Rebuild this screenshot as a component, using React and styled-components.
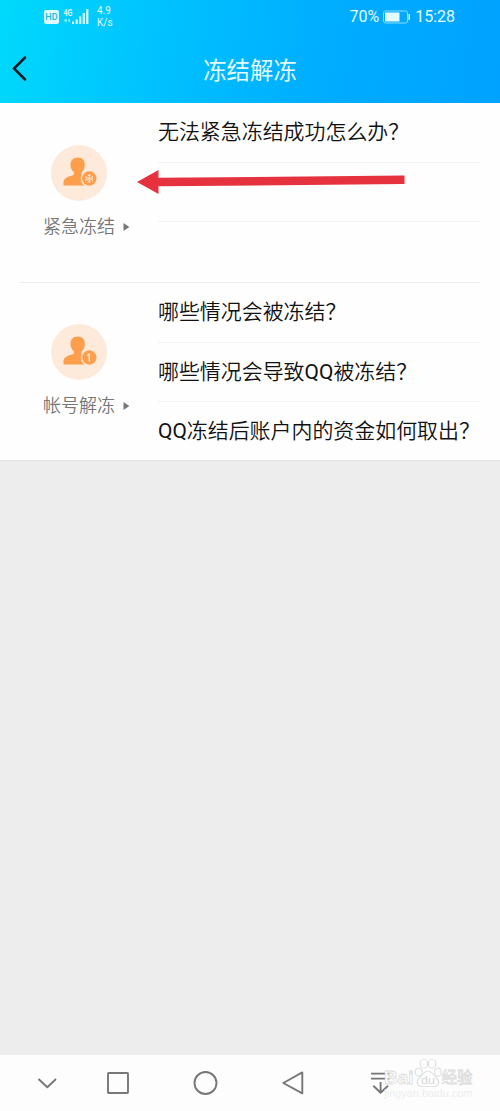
import React from 'react';
import styled, { createGlobalStyle } from 'styled-components';

const GlobalStyle = createGlobalStyle`
  * { box-sizing: border-box; }
  body {
    margin: 0;
    background: #ededed;
    font-family: Roboto, "Noto Sans CJK SC", sans-serif;
  }
`;

const Screen = styled.div`
  position: relative;
  display: flex;
  flex-direction: column;
  width: 500px;
  height: 1111px;
  overflow: hidden;
  background: #ededed;
`;

const Header = styled.header`
  height: 103px;
  color: #e4fbff;
  background: linear-gradient(100deg, #00d9fc 0%, #00c2ff 32%, #00adff 65%, #00a2ff 100%);
`;

const StatusBar = styled.div`
  display: flex;
  justify-content: space-between;
  height: 35px;
  padding: 0 45px 0 44px;
`;

const StatusGroup = styled.div`
  display: flex;
  align-items: center;
  height: 34px;
`;

const Speed = styled.div`
  margin-left: 8px;
  font-size: 10px;
  line-height: 12.5px;
`;

const StatusText = styled.span`
  font-size: 16px;
  line-height: 36px;
`;

const Battery = styled.svg`
  width: 28px;
  height: 14px;
  margin: 0 4px;
`;

const TitleBar = styled.div`
  display: grid;
  grid-template-columns: 40px 1fr 40px;
  align-items: center;
  height: 68px;
`;

const Title = styled.h1`
  margin: 0;
  padding-top: 3px;
  font-size: 23.4px;
  font-weight: 400;
  line-height: 34px;
  text-align: center;
`;

const Panel = styled.main`
  height: 358px;
  padding: 0 20px;
  background: #fefefe;
  border-bottom: 1px solid #e2e2e2;
`;

const Section = styled.section`
  display: flex;
  height: ${props => props.$height}px;
  border-bottom: ${props => (props.$last ? 'none' : '1px solid #ebebeb')};
`;

const Category = styled.div`
  display: flex;
  flex-direction: column;
  width: 138px;
  padding: ${props => props.$top}px 0 0 23px;
`;

const Avatar = styled.svg`
  display: block;
  width: 56px;
  height: 56px;
  margin-left: 8px;
`;

const CategoryName = styled.div`
  display: flex;
  align-items: center;
  gap: 8px;
  height: 26px;
  margin-top: 13px;
  color: #777;
  font-size: 18px;
  font-weight: 350;
  line-height: 28px;
  white-space: nowrap;
`;

const Questions = styled.ul`
  flex: 1;
  margin: 0;
  padding: 0;
  list-style: none;
`;

const Question = styled.li`
  height: ${props => props.$height}px;
  color: #111;
  font-size: 20.95px;
  font-weight: 350;
  line-height: 59px;
  white-space: nowrap;
  border-bottom: 1px solid #f3f3f3;

  &:last-child {
    border-bottom: none;
  }
`;

const Latin = styled.span`
  font-weight: 400;
`;

const Pointer = styled.svg`
  position: absolute;
  left: 137px;
  top: 169px;
`;

const NavBar = styled.nav`
  display: flex;
  align-items: center;
  height: 56px;
  margin-top: auto;
  padding-left: 34px;
  background: #fdfdfd;
`;

const NavIcon = styled.svg`
  width: 26px;
  height: 26px;
  margin-right: ${props => props.$gap || 0}px;
  fill: none;
  stroke: #777;
  stroke-width: 1.9;
  stroke-linejoin: round;
`;

const Watermark = styled.div`
  position: absolute;
  left: 384px;
  bottom: 12px;
  display: flex;
  flex-direction: column;
  width: 92px;
  color: rgba(255, 255, 255, 0.6);
  font-family: "Liberation Sans", "Noto Sans CJK SC", sans-serif;
  -webkit-text-stroke: 0.8px #dcdcdc;
`;

const Brand = styled.div`
  display: flex;
  align-items: flex-end;
  height: 31px;
  font-size: 19px;
  font-weight: 700;
  line-height: 20px;
`;

const BrandSuffix = styled.span`
  font-size: 15.5px;
  font-weight: 400;
`;

const Site = styled.div`
  color: #ededed;
  font-size: 11px;
  line-height: 11px;
  white-space: nowrap;
  -webkit-text-stroke: 0;
`;

const Person = ({ kind }) => (
  <Avatar viewBox="0 0 56 56">
    <circle cx="28" cy="28" r="28" fill="#fdeadb" />
    <path
      d="M26.8 12.5C31.5 12.5 34.2 15.5 33.8 20.5C33.5 24 32.5 25.8 30.7 27.2V30L40 33.5V40.5H12.5V37.5C12.5 33.5 16 31.8 22.8 30V27.2C20.8 25.5 19.7 23.5 19.5 20.5C19.2 15.5 22 12.5 26.8 12.5Z"
      fill="#fd9e4d"
    />
    <circle cx="38.3" cy="33.5" r="8.6" fill="#fdeadb" />
    <circle cx="38.3" cy="33.5" r="7.2" fill="#fd9e4d" />
    {kind === 'freeze' ? (
      <path
        d="M38.3 29V38M34.4 31.2L42.2 35.8M34.4 35.8L42.2 31.2M36.8 29.8L38.3 31.2L39.8 29.8M36.8 37.2L38.3 35.8L39.8 37.2M34.5 32.8L36 33.5L34.5 34.6M42.1 32.8L40.6 33.5L42.1 34.6"
        fill="none"
        stroke="#fff0e2"
        strokeWidth="0.8"
      />
    ) : (
      <path d="M38.3 37.6V29.6M36.3 31.6L38.3 29.6" fill="none" stroke="#fff0e2" strokeWidth="1.3" />
    )}
  </Avatar>
);

const sections = [
  {
    name: '紧急冻结',
    kind: 'freeze',
    height: 180,
    top: 42,
    questions: ['无法紧急冻结成功怎么办？', '', ''],
  },
  {
    name: '帐号解冻',
    kind: 'unfreeze',
    height: 177,
    top: 41,
    last: true,
    questions: [
      '哪些情况会被冻结？',
      <>哪些情况会导致<Latin>QQ</Latin>被冻结？</>,
      <><Latin>QQ</Latin>冻结后账户内的资金如何取出？</>,
    ],
  },
];

const SignalIcons = () => (
  <svg width="45" height="18" viewBox="0 0 45 18">
    <rect x="0" y="2" width="15" height="14" rx="2" fill="#dcfaff" />
    <text x="7.5" y="12.4" textAnchor="middle" fontSize="9" fontWeight="500" fill="#17b8df">HD</text>
    <text x="19.5" y="8" fontSize="8.5" fontWeight="700" fill="#dcfaff" textLength="9" lengthAdjust="spacingAndGlyphs">4G</text>
    <path d="M20 12.5L22 10.5L23 12.5L22 14.5ZM24.5 11H26V14H24.5Z" fill="#a2efff" />
    <path d="M28 13.5H30V16H28ZM31.6 11.5H33.8V16H31.6ZM35.1 8.5H37.3V16H35.1ZM38.7 5H40.9V16H38.7ZM42.2 1H44.4V16H42.2Z" fill="#dcfaff" />
  </svg>
);

const App = () => (
  <>
    <GlobalStyle />
    <Screen>
      <Header>
        <StatusBar>
          <StatusGroup>
            <SignalIcons />
            <Speed>4.9<br />K/s</Speed>
          </StatusGroup>
          <StatusGroup>
            <StatusText>70%</StatusText>
            <Battery viewBox="0 0 28 14">
              <rect x="0.5" y="1" width="24" height="12" rx="2" fill="none" stroke="#8addff" />
              <rect x="2" y="2.5" width="14.5" height="9" fill="#e4fbff" />
              <rect x="25.4" y="4" width="1.6" height="6" fill="#c5f4ff" />
            </Battery>
            <StatusText>15:28</StatusText>
          </StatusGroup>
        </StatusBar>
        <TitleBar>
          <svg width="40" height="30" viewBox="0 0 40 30">
            <path d="M25 3.5L14 14.5L25 25.5" fill="none" stroke="#071a22" strokeWidth="2.5" strokeLinecap="round" />
          </svg>
          <Title>冻结解冻</Title>
        </TitleBar>
      </Header>

      <Panel>
        {sections.map(section => (
          <Section key={section.name} $height={section.height} $last={section.last}>
            <Category $top={section.top}>
              <Person kind={section.kind} />
              <CategoryName>
                {section.name}
                <svg width="7" height="10" viewBox="0 0 7 10">
                  <path d="M0.5 1L6.3 5L0.5 9Z" fill="#777" />
                </svg>
              </CategoryName>
            </Category>
            <Questions>
              {section.questions.map((question, i) => (
                <Question key={i} $height={i === 0 ? 59.5 : 59.7}>{question}</Question>
              ))}
            </Questions>
          </Section>
        ))}
      </Panel>

      {/* arrow pointing at the emergency freeze entry */}
      <Pointer width="268" height="26" viewBox="0 0 268 26">
        <path d="M0 13L21.5 1V8.8L267.5 6.5V15L21.5 17.3V25Z" fill="#e5323e" />
      </Pointer>

      <NavBar>
        <NavIcon $gap={45} viewBox="0 0 26 26">
          <path d="M4.5 9L13.3 17.3L22 9" />
        </NavIcon>
        <NavIcon $gap={61} viewBox="0 0 26 26">
          <rect x="3" y="3" width="20" height="20" rx="0.8" />
        </NavIcon>
        <NavIcon $gap={62} viewBox="0 0 26 26">
          <circle cx="13.5" cy="13" r="11" />
        </NavIcon>
        <NavIcon $gap={61} viewBox="0 0 26 26">
          <path d="M22.3 2.4V23.4L3.3 13Z" />
        </NavIcon>
        <NavIcon viewBox="0 0 26 26">
          <path d="M4 3.6H18M20 3.6H22.5M4 8.6H18M20 8.6H22.5M13.6 12V22.8M6.3 15.8L13.6 22.8L21 15.8" />
        </NavIcon>
      </NavBar>

      <Watermark>
        <Brand>
          Bai
          <svg width="28" height="30" viewBox="0 0 27 32" preserveAspectRatio="none" fill="#fdfdfd" stroke="#dcdcdc">
            <ellipse cx="4.5" cy="15" rx="3.4" ry="4.4" />
            <ellipse cx="9.5" cy="6" rx="3.6" ry="4.8" />
            <ellipse cx="17.5" cy="6" rx="3.6" ry="4.8" />
            <ellipse cx="23" cy="15" rx="3.2" ry="4.4" />
            <path d="M13.5 14C17 14 18.5 18 22 21.5C25.5 25.5 23.5 30.5 18.5 30.5H8.5C3 30.5 1.5 25 5 21.5C8.5 18 9.5 14 13.5 14Z" />
            <text x="13.5" y="28" textAnchor="middle" fontSize="12" fontWeight="400" fill="#d6d6d6" stroke="none">du</text>
          </svg>
          <BrandSuffix>经验</BrandSuffix>
        </Brand>
        <Site>jingyan.baidu.com</Site>
      </Watermark>
    </Screen>
  </>
);

export default App;
